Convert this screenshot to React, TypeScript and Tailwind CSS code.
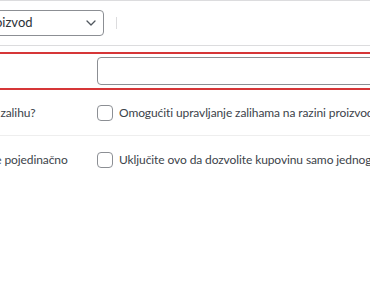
import React from 'react';

const Checkbox: React.FC = () => (
  <span className="inline-block w-4 h-4 shrink-0 rounded-[4px] border border-[#8c8f94] bg-white" />
);

const CheckRow: React.FC<{ label: string; text: string; height: string; divider?: boolean }> = ({
  label, text, height, divider,
}) => (
  <div className={`flex items-center ${height} ${divider ? 'border-b border-[#eeeeee]' : ''}`}>
    <div className="-ml-[52px] w-[149px] shrink-0 whitespace-nowrap">{label}</div>
    <div className="flex items-center gap-[6px] whitespace-nowrap">
      <Checkbox />
      <span>{text}</span>
    </div>
  </div>
);

export default function App() {
  return (
    <div className="w-[370px] h-[305px] overflow-hidden bg-white text-[12px] tracking-[-0.1px] text-[#3c434a] font-['Lato',sans-serif]">
      {/* product type header */}
      <div className="h-[46px] flex items-center border-t border-b border-[#dcdcde]">
        <div className="-ml-[100px] w-[204px] h-[26px] shrink-0 flex items-center justify-between rounded-[4px] border border-[#8c8f94] pl-2 pr-[6px] text-[13px] tracking-normal text-[#2c3338] whitespace-nowrap">
          <span>Jednostavan proizvod</span>
          <svg width="10" height="6" viewBox="0 0 10 6" fill="none" className="mr-[1px]">
            <path d="M1 1l4 4 4-4" stroke="#50575e" strokeWidth="1.3" strokeLinecap="round" strokeLinejoin="round" />
          </svg>
        </div>
        <div className="ml-3 w-px h-3 bg-[#dcdcde]" />
      </div>

      {/* highlighted field */}
      <div className="mt-[6px] -mx-2 border-y-2 border-[#d63638] h-[38px]">
        <div className="flex pt-[3px] pl-2">
          <div className="-ml-[52px] w-[149px] shrink-0 whitespace-nowrap leading-[28px]">SKU</div>
          <div className="w-[300px] h-[28px] shrink-0 rounded-[4px] border border-[#8c8f94] bg-white" />
        </div>
      </div>

      <CheckRow label="Upravljati zalihu?" text="Omogućiti upravljanje zalihama na razini proizvoda" height="h-[46px]" divider />
      <CheckRow label="Prodaje se pojedinačno" text="Uključite ovo da dozvolite kupovinu samo jednog artikla" height="h-[48px]" />
    </div>
  );
}
